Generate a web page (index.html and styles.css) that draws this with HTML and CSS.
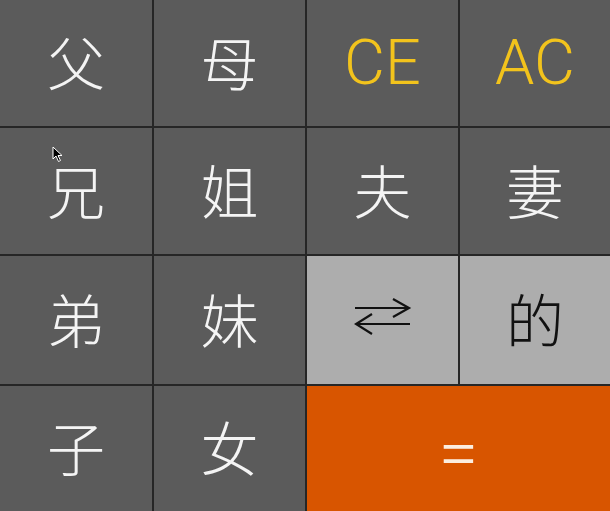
FILE: index.html
```html
<!DOCTYPE html>
<html lang="zh">
<head>
    <meta charset="UTF-8">
    <title>Kinship Calculator</title>
    <link rel="stylesheet" href="styles.css">
</head>
<body>

<div class="pad">
    <button class="key">父</button>
    <button class="key" lang="zh-TW">母</button>
    <button class="key op">CE</button>
    <button class="key op">AC</button>

    <button class="key">兄</button>
    <button class="key">姐</button>
    <button class="key">夫</button>
    <button class="key">妻</button>

    <button class="key">弟</button>
    <button class="key">妹</button>
    <button class="key light">
        <svg width="58" height="40" viewBox="0 0 58 40">
            <path d="M1 10 H55 M39 1 L55 10 L39 19" />
            <path d="M3 26 H56 M18 16 L2 26 L18 36" />
        </svg>
    </button>
    <button class="key light">的</button>

    <button class="key">子</button>
    <button class="key">女</button>
    <button class="key equals">=</button>
</div>

<!-- mouse pointer in the shot -->
<svg class="cursor" width="12" height="17" viewBox="0 0 12 17">
    <path d="M1 1 L1 13 L4 10 L6.5 15.5 L8.5 14.5 L6 9.5 L10 9.5 Z" />
</svg>

</body>
</html>
```

FILE: styles.css
```css
html, body {
    margin: 0;
    padding: 0;
    background-color: #262626;
    overflow: hidden;
}

.pad {
    display: grid;
    grid-template-columns: 152px 151px 151px 1fr;
    grid-template-rows: 126px 126px 128px 1fr;
    gap: 2px;
    width: 610px;
    height: 511px;
    background-color: #262626;
}

.key {
    display: flex;
    align-items: center;
    justify-content: center;
    border: none;
    padding: 0 0 5px 0;
    margin: 0;
    background-color: #5b5b5b;
    color: #f4f4f4;
    font-family: "Noto Sans CJK TC", "Noto Sans CJK SC", sans-serif;
    font-weight: 300;
    font-size: 58px;
    line-height: 1;
}

.key.op {
    color: #f2c31c;
    font-family: Roboto, "Liberation Sans", sans-serif;
    font-weight: 300;
    font-size: 63px;
    padding: 0 0 2px 0;
}

.key.light {
    background-color: #adadad;
    color: #111;
}

.key.light svg path {
    fill: none;
    stroke: #111;
    stroke-width: 2.2;
}

.key.equals {
    grid-column: span 2;
    background-color: #d85500;
    color: #fbeee0;
    font-family: Roboto, "Liberation Sans", sans-serif;
    font-weight: 300;
    font-size: 72px;
    padding: 10px 0 0 0;
}

.cursor {
    position: absolute;
    left: 52px;
    top: 146px;
}

.cursor path {
    fill: #000;
    stroke: #fff;
    stroke-width: 1;
}
```
